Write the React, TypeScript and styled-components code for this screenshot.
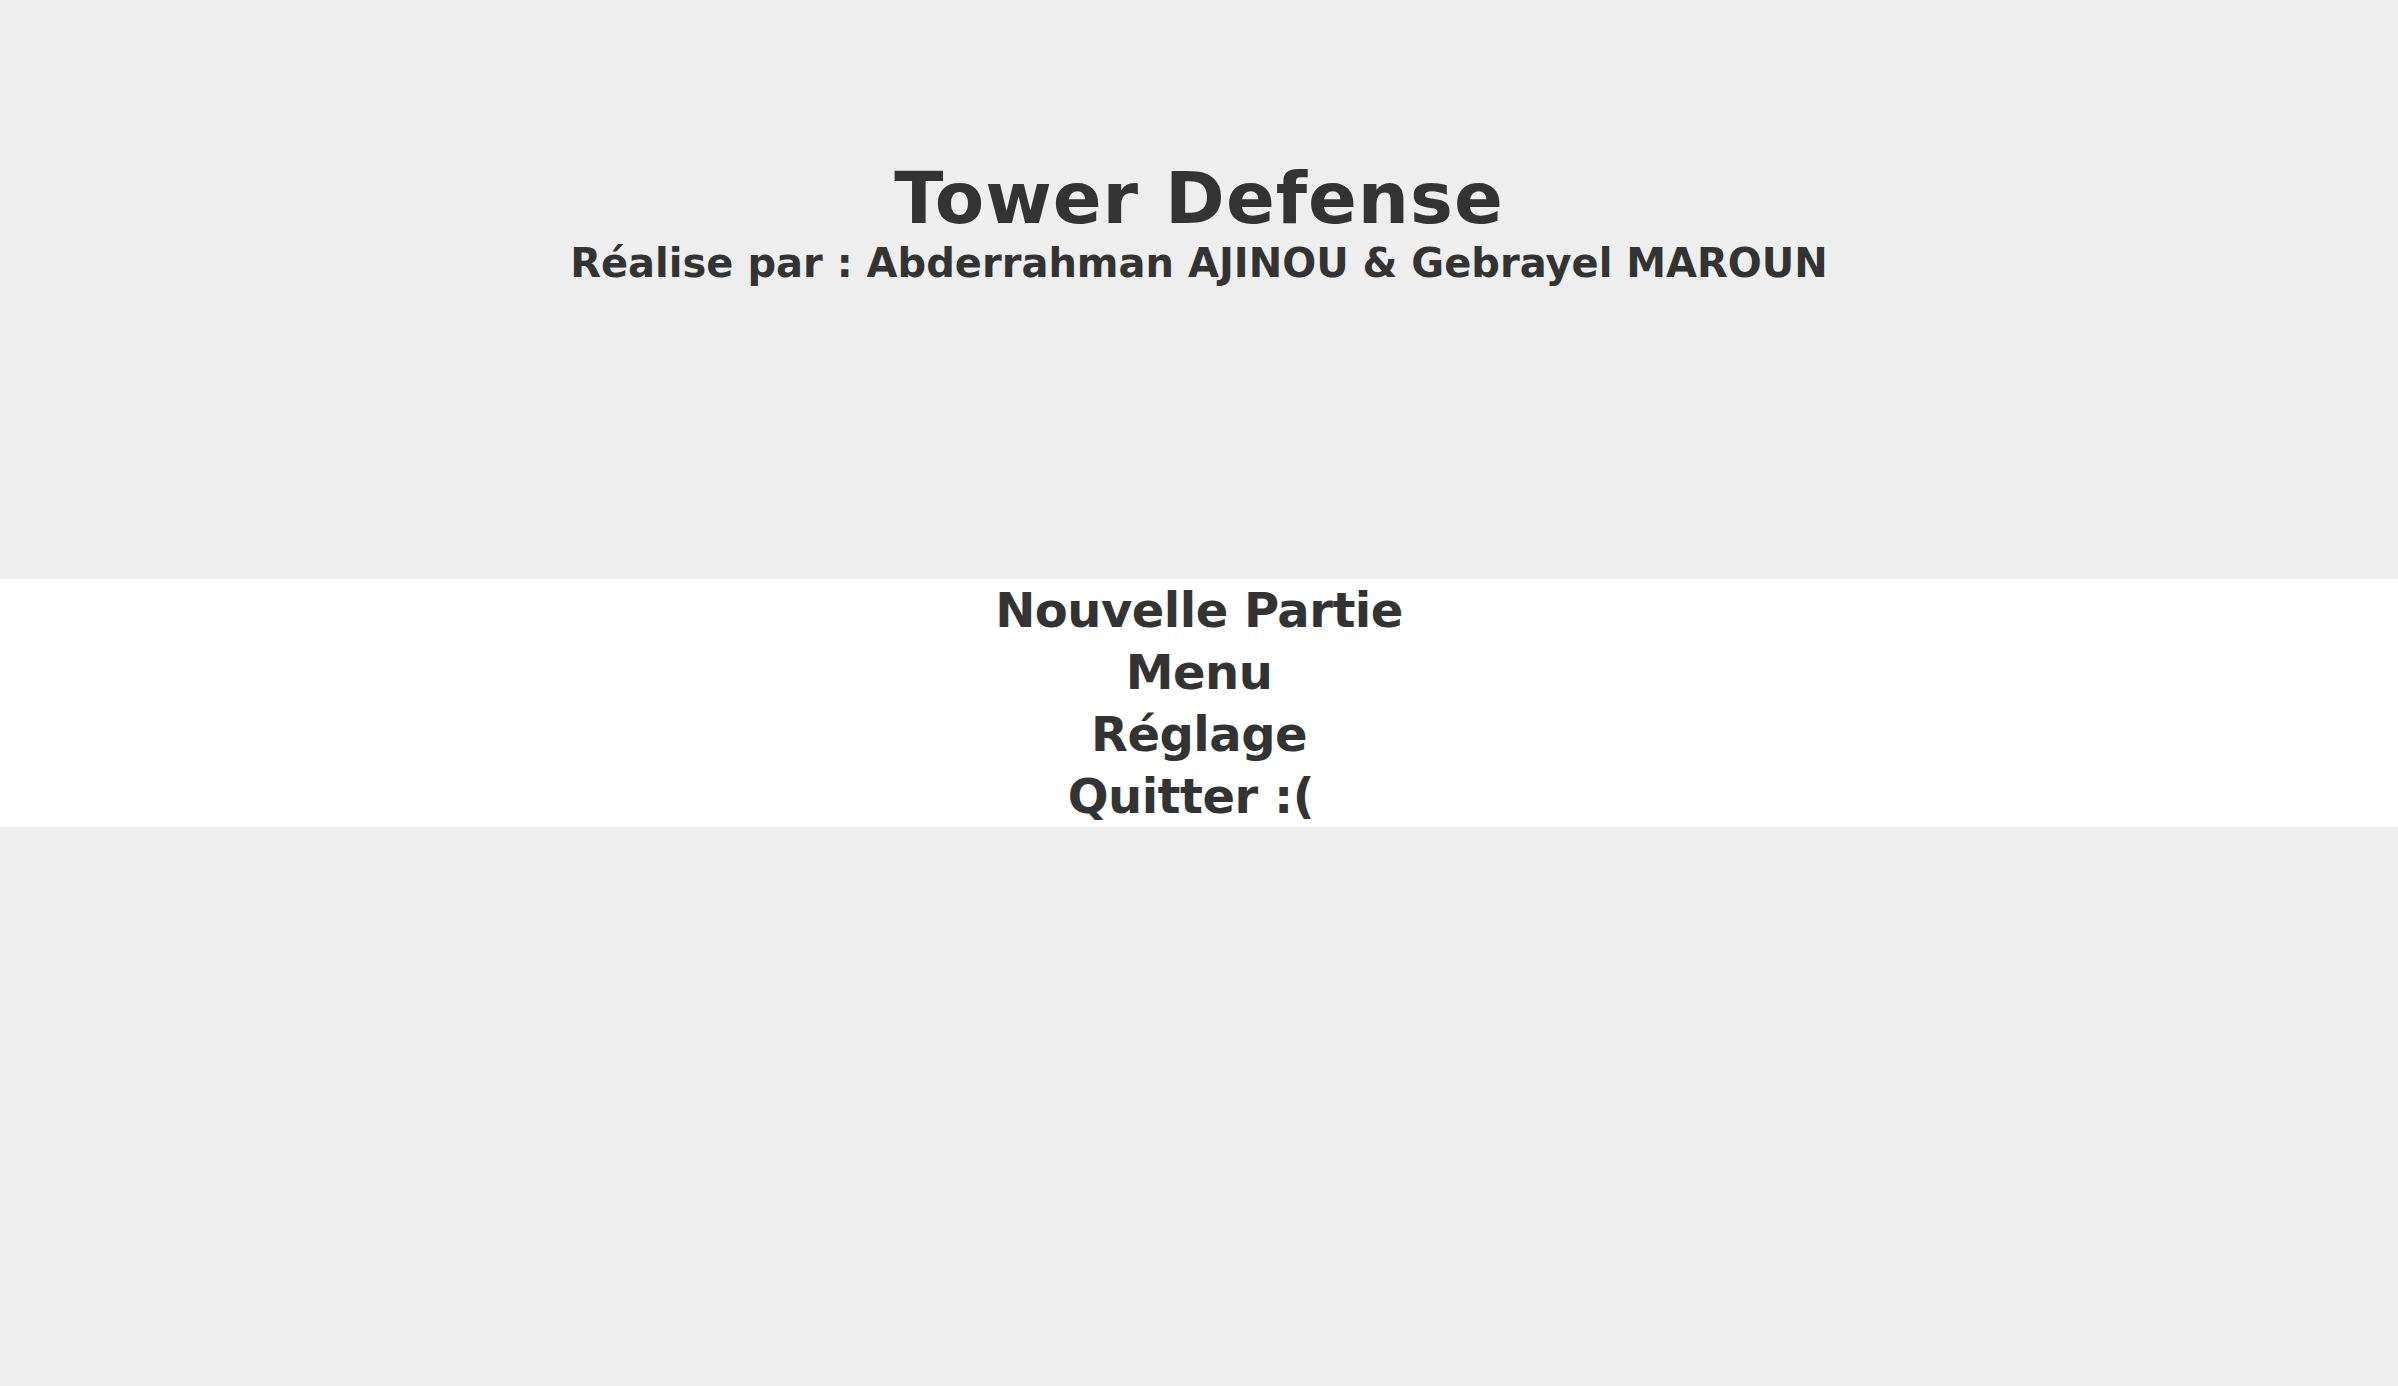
import React from 'react';
import styled, { createGlobalStyle } from 'styled-components';

const GlobalStyle = createGlobalStyle`
  html, body {
    margin: 0;
    padding: 0;
    background: #eeeeee;
  }

  body {
    font-family: "DejaVu Sans", "Liberation Sans", sans-serif;
    color: #333333;
  }
`;

const Page = styled.div`
  display: flex;
  flex-direction: column;
  align-items: stretch;

  min-height: 100vh;
  padding-top: 156px;
  box-sizing: border-box;
`;

const Header = styled.header`
  display: flex;
  flex-direction: column;
  align-items: center;
  text-align: center;
`;

const Title = styled.h1`
  margin: 0;
  font-size: 72px;
  font-weight: bold;
  letter-spacing: 1px;
`;

const Credits = styled.h2`
  margin: 0;
  font-size: 40px;
  font-weight: bold;
`;

const MenuList = styled.ul`
  list-style-type: none;

  display: flex;
  flex-direction: column;
  align-items: center;

  margin: 293px 0 0;
  padding: 0;

  background: #ffffff;
`;

const MenuListItem = styled.li`
  padding: 3px 0;
  font-size: 48px;
  font-weight: bold;
  letter-spacing: -0.5px;
  text-align: center;
  white-space: pre;

  cursor: pointer;
`;

function App() {
  return (
    <>
      <GlobalStyle />
      <Page>
        <Header>
          <Title>Tower Defense</Title>
          <Credits>Réalise par : Abderrahman AJINOU &amp; Gebrayel MAROUN</Credits>
        </Header>
        <MenuList>
          <MenuListItem>Nouvelle Partie</MenuListItem>
          <MenuListItem>Menu</MenuListItem>
          <MenuListItem>Réglage</MenuListItem>
          <MenuListItem>{'Quitter :( '}</MenuListItem>
        </MenuList>
      </Page>
    </>
  );
}

export default App;
